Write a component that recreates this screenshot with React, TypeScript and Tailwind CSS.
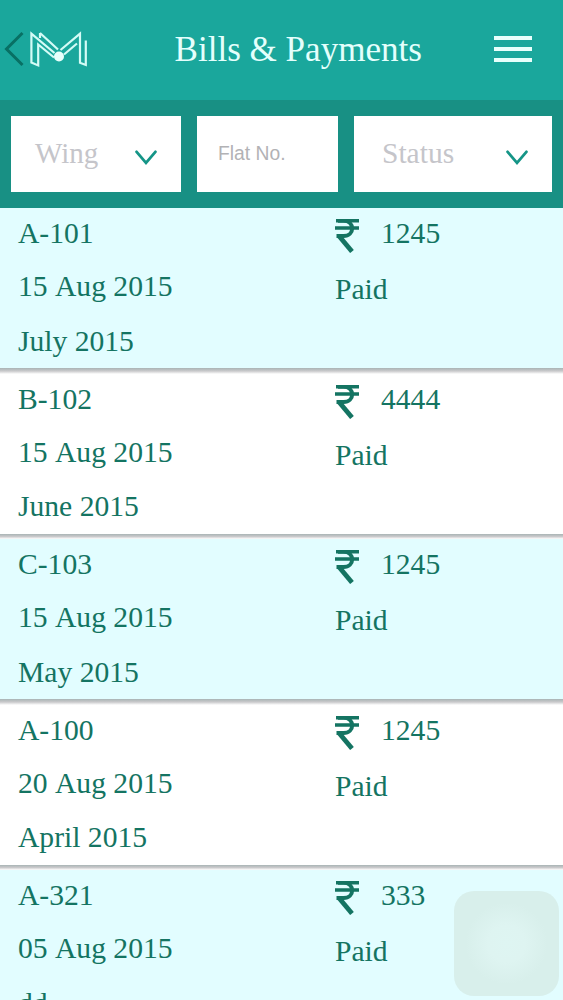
const bills = [
  { flat: "A-101", date: "15 Aug 2015", period: "July 2015", amount: "1245", status: "Paid" },
  { flat: "B-102", date: "15 Aug 2015", period: "June 2015", amount: "4444", status: "Paid" },
  { flat: "C-103", date: "15 Aug 2015", period: "May 2015", amount: "1245", status: "Paid" },
  { flat: "A-100", date: "20 Aug 2015", period: "April 2015", amount: "1245", status: "Paid" },
  { flat: "A-321", date: "05 Aug 2015", period: "dd", amount: "333", status: "Paid" },
];

function Logo() {
  return (
    <svg width="59" height="38" viewBox="30 31 59 38" className="ml-[6px] shrink-0" fill="none" stroke="#d4fbf6" strokeWidth="2.2">
      <path d="M54.5 54 L31.4 34.6 V63.6 L38.2 66.4 V45.5 L54 58.5" />
      <path d="M40 34 V39 M40 34 L58 50.5" />
      <path d="M60.5 51 L80 34.6 V63.8 L85.8 66 V41.5" />
      <path d="M64 55.5 L77 44.5" />
      <circle cx="59" cy="57.5" r="5" fill="#e8fffc" stroke="none" />
    </svg>
  );
}

function Rupee() {
  return (
    <svg width="24" height="34" viewBox="0 0 24 34" className="mt-[11px] shrink-0" fill="none" stroke="#147462">
      <path d="M1 1.8 H24 M0 9 H24" strokeWidth="3.6" />
      <path d="M3 1.8 H8.5 C20 1.8 20 17 8.5 17 H1.5" strokeWidth="4" />
      <path d="M4 17 L17 32.5" strokeWidth="4.8" />
    </svg>
  );
}

function Chevron() {
  return (
    <svg width="22" height="15" viewBox="0 0 22 15" className="mt-[6px] shrink-0" fill="none" stroke="#159587" strokeWidth="2.8" strokeLinecap="round">
      <path d="M1.6 1.8 L11 12.8 L20.4 1.8" />
    </svg>
  );
}

export default function App() {
  return (
    <div className="relative h-[1000px] w-[563px] overflow-hidden bg-white font-['Liberation_Serif',serif]">
      <header className="flex h-[100px] items-center bg-[#1aa79c] pb-[2px]">
        <svg width="20" height="36" viewBox="0 0 20 36" className="ml-1 shrink-0" fill="none" stroke="#087064" strokeWidth="3">
          <path d="M18.5 2 L2.5 18 L18.5 34" />
        </svg>
        <Logo />
        <h1 className="ml-[85.5px] pt-[2px] text-[35.1px] leading-[40px] whitespace-nowrap text-[#e4fffc]">Bills &amp; Payments</h1>
        <button aria-label="Menu" className="mr-[31px] ml-auto flex w-[38px] flex-col gap-[7px]">
          <span className="h-1 bg-[#e8fffc]" />
          <span className="h-1 bg-[#e8fffc]" />
          <span className="h-1 bg-[#e8fffc]" />
        </button>
      </header>
      <div className="flex h-[108px] gap-4 bg-[#189084] px-[11px] pt-4 pb-4">
        <div className="flex w-[170px] items-center justify-between bg-white pr-6 pl-6 text-[29px] text-[#c5c5ca]">
          <span className="pb-[1px]">Wing</span>
          <Chevron />
        </div>
        <div className="flex w-[141px] items-center bg-white pl-[21px] font-['Liberation_Sans',sans-serif] text-[19.3px] text-[#b2b2b5]">Flat No.</div>
        <div className="flex flex-1 items-center justify-between bg-white pr-6 pl-7 text-[29.5px] text-[#c5c5ca]">
          <span className="pb-[2px]">Status</span>
          <Chevron />
        </div>
      </div>
      <main>
        {bills.map((bill) => (
          <section key={bill.flat} className="flex h-[165.5px] flex-col bg-white text-[29.6px] leading-[50px] text-[#147462] odd:bg-[#e2fdff]">
            <div className="flex h-[160px] shrink-0">
              <div className="flex w-[335px] shrink-0 flex-col pl-[18px] [font-kerning:none]">
                <span>{bill.flat}</span>
                <span className="mt-[3px] mb-[4.5px]">{bill.date}</span>
                <span>{bill.period}</span>
              </div>
              <div className="flex flex-col gap-[6px]">
                <div className="flex h-[50px] gap-[22px]">
                  <Rupee />
                  <span>{bill.amount}</span>
                </div>
                <span>{bill.status}</span>
              </div>
            </div>
            <div className="h-[5.5px] bg-linear-to-b from-[#a9b4b5] via-[#c9c9cb] to-white" />
          </section>
        ))}
      </main>
      <div className="absolute top-[891px] left-[454px] size-[105px] rounded-[20px] bg-[radial-gradient(circle,#def5f2_0%,#def4f1_25%,#d8efeb_55%)]" />
    </div>
  );
}
